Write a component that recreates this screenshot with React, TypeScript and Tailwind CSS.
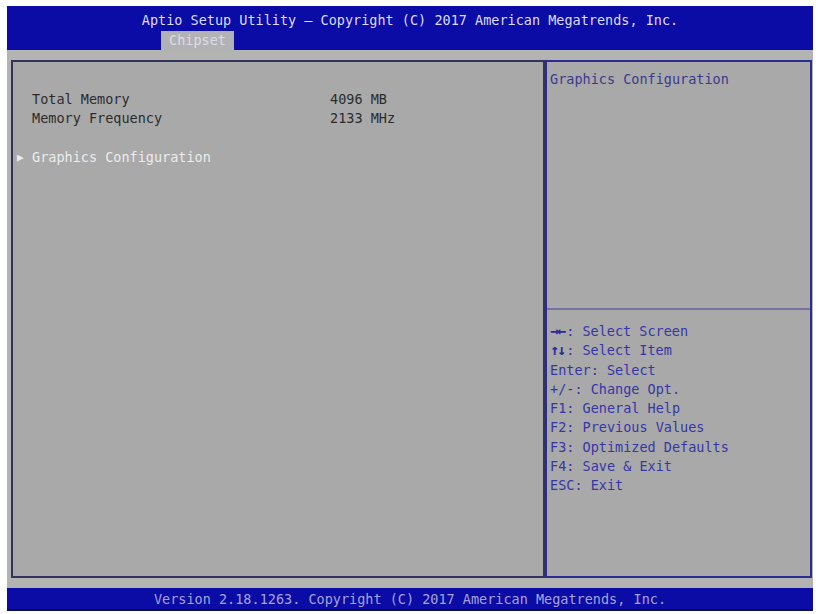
const mono = { fontFamily: '"DejaVu Sans Mono", "Liberation Mono", monospace' };

const info = [
  { label: "Total Memory", value: "4096 MB" },
  { label: "Memory Frequency", value: "2133 MHz" },
];

const help = [
  { keys: "→←", text: ": Select Screen" },
  { keys: "↑↓", text: ": Select Item" },
  { keys: "", text: "Enter: Select" },
  { keys: "", text: "+/-: Change Opt." },
  { keys: "", text: "F1: General Help" },
  { keys: "", text: "F2: Previous Values" },
  { keys: "", text: "F3: Optimized Defaults" },
  { keys: "", text: "F4: Save & Exit" },
  { keys: "", text: "ESC: Exit" },
];

export default function App() {
  return (
    <div className="w-[818px] h-[614px] bg-white pl-[7px] pt-[6px]" style={mono}>
      <div className="w-[806px] h-[605px] flex flex-col text-[13.5px] leading-[19.3px]">
        {/* Header */}
        <div className="h-[44px] bg-[#0b0ba6] flex flex-col pt-[5px]">
          <div className="text-center text-[#dcdcff] whitespace-pre">
            Aptio Setup Utility – Copyright (C) 2017 American Megatrends, Inc.
          </div>
          <div className="mt-[1px] ml-[154px] w-[73px] h-[19px] bg-[#b2b2b4] text-[#dcdce8] text-center leading-[19px]">
            Chipset
          </div>
        </div>

        {/* Body */}
        <div className="flex-1 bg-[#b3b3b2] pl-[4px] pr-[1px] py-[10px]">
          <div className="h-full flex bg-[#a9a9a9]">
            <div className="w-[534px] border-2 border-[#33335c] pt-[28px] pl-[4px]">
              {info.map((row) => (
                <div key={row.label} className="flex text-[#2c2c2c]">
                  <span className="w-[15px]" />
                  <span className="w-[298px] whitespace-pre">{row.label}</span>
                  <span className="whitespace-pre">{row.value}</span>
                </div>
              ))}
              <div className="h-[19.3px]" />
              <div className="flex items-center text-[#ececec]">
                <span className="w-[15px] text-[11px] leading-none">▶</span>
                <span className="whitespace-pre">Graphics Configuration</span>
              </div>
            </div>
            <div className="flex-1 border-2 border-[#2c2c94] flex flex-col">
              <div className="h-[248px] pt-[8px] pl-[3px] text-[#3a3a8e] border-b-2 border-[#7474a0]">
                Graphics Configuration
              </div>
              <div className="pt-[12px] pl-[3px] text-[#3636a8]">
                {help.map((line) => (
                  <div key={line.text} className="flex whitespace-pre">
                    {line.keys && (
                      <span className="w-[16.2px] font-bold text-[15px] tracking-[-2px] text-[#2a2aa0]">
                        {line.keys}
                      </span>
                    )}
                    <span>{line.text}</span>
                  </div>
                ))}
              </div>
            </div>
          </div>
        </div>

        {/* Footer */}
        <div className="h-[23px] bg-[#0b0ba6] text-center text-[#a4a4dc] leading-[22px] whitespace-pre border-b-[2px] border-[#101040]">
          Version 2.18.1263. Copyright (C) 2017 American Megatrends, Inc.
        </div>
      </div>
    </div>
  );
}
